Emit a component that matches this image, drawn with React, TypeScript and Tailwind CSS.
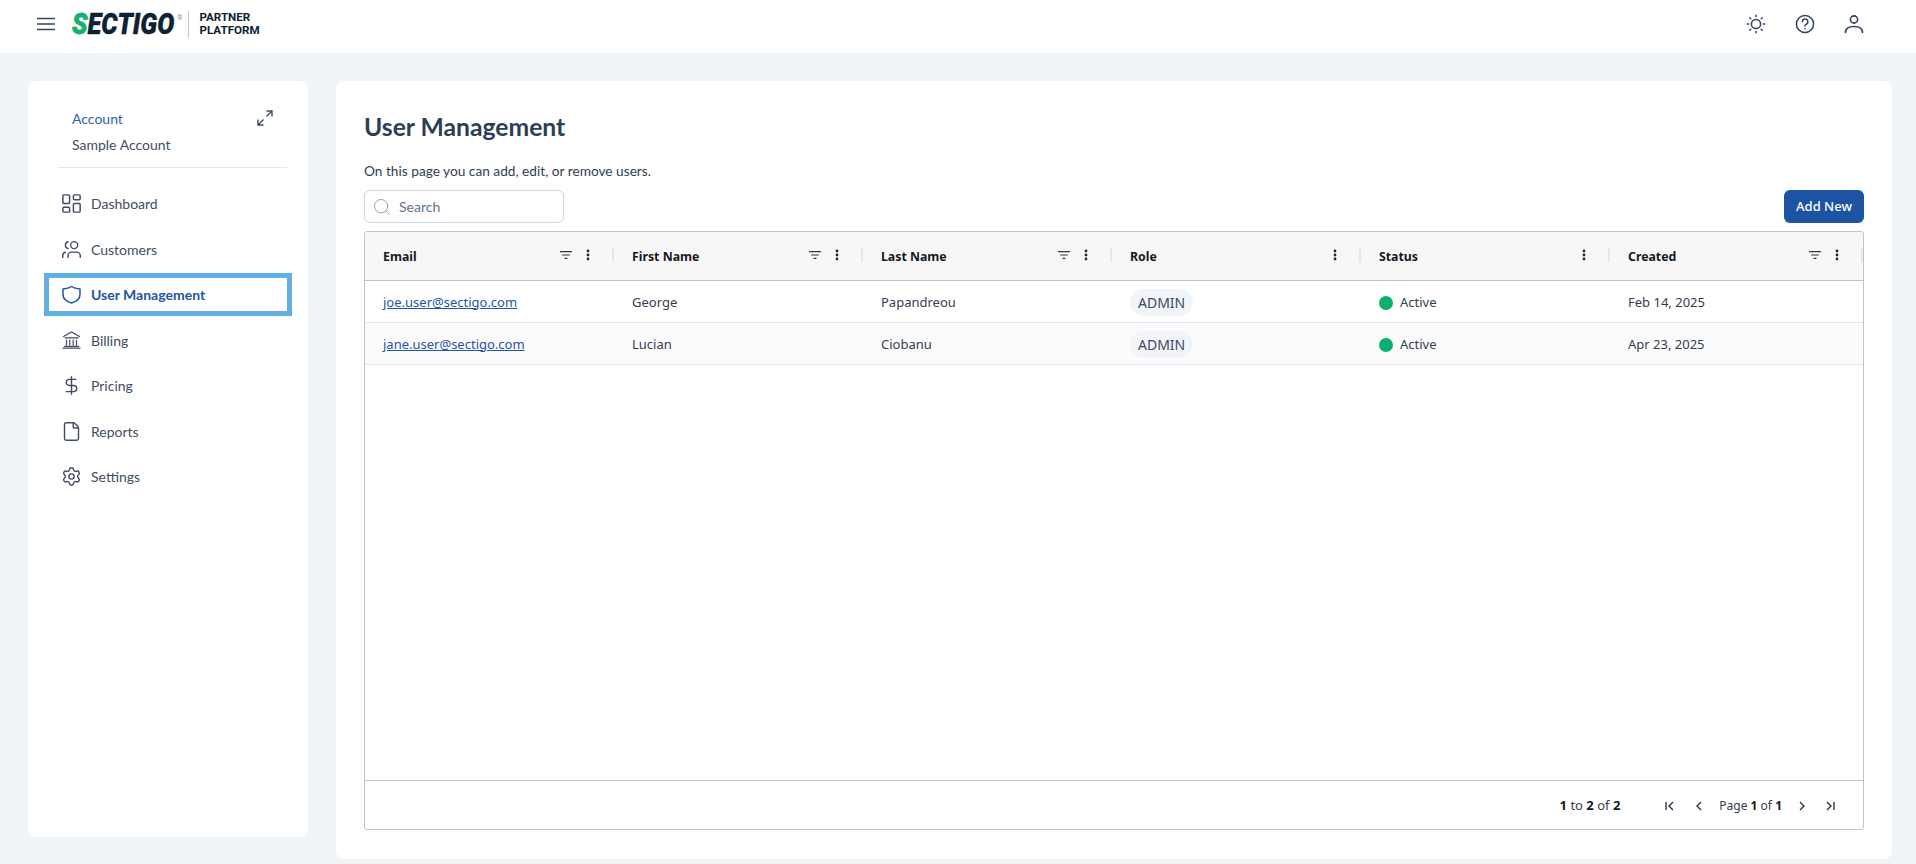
import { DollarSign, File, LayoutDashboard, Search, Settings, Users } from "lucide-react";
import type { ReactNode } from "react";

function ShieldIcon() {
  return (
    <svg width="19" height="19" viewBox="0 0 19 19" fill="none" stroke="currentColor" strokeWidth="1.5" strokeLinejoin="round">
      <path d="M9.5 1.5C11.5 3 14.5 3.8 18 4v5.5c0 4-3.5 7-8.5 8.5C4.5 16.500 1 13.500 1 9.500V4c3.500-.2 6.500-1 8.500-2.500z" />
    </svg>
  );
}

function BillingIcon() {
  return (
    <svg width="19" height="18" viewBox="0 0 19 18" fill="none" stroke="currentColor" strokeWidth="1.2" strokeLinecap="round">
      <path d="M1.500 5.500L9.500 1l8 4.500M3 6.800h13M4.500 9v5M7.800 9v5M11.200 9v5M14.500 9v5M2.500 15.300h14" />
      <path d="M1 17.200h17" strokeWidth="1.300" />
    </svg>
  );
}

const navItems = [
  { label: "Dashboard", icon: <LayoutDashboard size={23} strokeWidth={1.55} /> },
  { label: "Customers", icon: <Users size={21} strokeWidth={1.6} className="-scale-x-100" /> },
  { label: "User Management", icon: <ShieldIcon />, active: true },
  { label: "Billing", icon: <BillingIcon /> },
  { label: "Pricing", icon: <DollarSign size={21} strokeWidth={1.6} /> },
  { label: "Reports", icon: <File size={21} strokeWidth={1.6} /> },
  { label: "Settings", icon: <Settings size={21} strokeWidth={1.6} /> },
];

const columns = [
  { label: "Email", filter: true },
  { label: "First Name", filter: true },
  { label: "Last Name", filter: true },
  { label: "Role", filter: false },
  { label: "Status", filter: false },
  { label: "Created", filter: true },
];

const users = [
  { email: "joe.user@sectigo.com", first: "George", last: "Papandreou", created: "Feb 14, 2025" },
  { email: "jane.user@sectigo.com", first: "Lucian", last: "Ciobanu", created: "Apr 23, 2025" },
];

const gridCols = "grid grid-cols-[repeat(5,249px)_1fr]";

function Logo() {
  return (
    <div className="flex items-center ml-[17px]">
      <div className="w-[103px] h-[30px] overflow-visible">
        <div className="origin-left scale-x-[0.85] whitespace-nowrap font-['Roboto',sans-serif] font-black italic text-[30px] leading-[30px] text-[#0d2233] [-webkit-text-stroke:0.4px_#0d2233]">
          <span className="text-[#14b26f] [-webkit-text-stroke:0.8px_#14b26f]">S</span>ECTIGO
        </div>
      </div>
      <span className="text-[7px] text-[#8a94a0] -mt-[12px] ml-[2px] font-['Roboto',sans-serif]">®</span>
      <div className="w-px h-[27px] bg-[#c3c8cf] ml-[5px] mr-[11px]" />
      <div className="font-['Roboto',sans-serif] font-bold text-[11.6px] leading-[13px] text-[#0d2233]">
        <div>PARTNER</div>
        <div>PLATFORM</div>
      </div>
    </div>
  );
}

function Header() {
  return (
    <header className="h-[53px] bg-white flex items-center pl-[37px] pr-[51px] pb-[5px] text-[#33445c]">
      <svg width="18" height="14" viewBox="0 0 18 14" fill="none" stroke="currentColor" strokeWidth="1.6">
        <path d="M0 1.5h18M0 7h18M0 12.5h18" />
      </svg>
      <Logo />
      <div className="ml-auto flex items-center gap-[27px]">
        <svg width="22" height="22" viewBox="0 0 22 22" fill="none" stroke="currentColor" strokeWidth="1.5" strokeLinecap="round">
          <circle cx="11" cy="11" r="4.6" />
          <path d="M11 2.2v1.4M11 18.4v1.4M2.2 11h1.4M18.4 11h1.4M4.8 4.8l1 1M16.2 16.2l1 1M4.8 17.2l1-1M16.2 5.8l1-1" />
        </svg>
        <svg width="22" height="22" viewBox="0 0 22 22" fill="none" stroke="currentColor" strokeWidth="1.5" strokeLinecap="round">
          <circle cx="11" cy="11" r="8.6" />
          <path d="M8.4 8.8a2.7 2.7 0 1 1 3.8 2.4c-.8.4-1.2.9-1.2 1.8" />
          <path d="M11 15.6v.1" />
        </svg>
        <svg width="22" height="22" viewBox="0 0 22 22" fill="none" stroke="currentColor" strokeWidth="1.6" strokeLinecap="round">
          <circle cx="11" cy="6.5" r="3.6" />
          <path d="M2.5 19.5c0-4 3.6-6 8.5-6s8.5 2 8.5 6" />
        </svg>
      </div>
    </header>
  );
}

function Sidebar() {
  return (
    <aside className="w-[280px] h-[756px] shrink-0 bg-white rounded-lg pt-[25px] font-['Lato',sans-serif]">
      <div className="ml-[30px] mr-[21px] h-[62px] border-b border-[#e2e8f0] pl-[14px] pr-[14px] flex justify-between">
        <div className="text-[14px] leading-[26px]">
          <div className="text-[#2c5fb3]">Account</div>
          <div className="text-[#3f4d63]">Sample Account</div>
        </div>
        <svg width="16" height="16" viewBox="0 0 16 16" fill="none" stroke="#3f4d63" strokeWidth="1.4" className="mt-[4px]">
          <path d="M9.5 1h5.5v5.5M15 1L9.5 6.5M6.5 15H1V9.5M1 15l5.5-5.5" />
        </svg>
      </div>
      <nav className="mt-[14px] mx-[16px] flex flex-col gap-[2.5px]">
        {navItems.map((item) => (
          <div
            key={item.label}
            className={
              item.active
                ? "h-[43px] flex items-center gap-[10px] pl-[13px] border-[5px] border-[#62afe6] text-[#1f54a6] font-bold text-[14px]"
                : "h-[43px] flex items-center gap-[10px] pl-[18px] text-[#3f4d63] text-[14px]"
            }
          >
            <span className="w-[19px] flex justify-center shrink-0 [&>svg]:max-w-none [&>svg]:shrink-0">{item.icon}</span>
            {item.label}
          </div>
        ))}
      </nav>
    </aside>
  );
}

function FilterIcon() {
  return (
    <svg width="12" height="8" viewBox="0 0 12 8" fill="none" stroke="#2b3648" strokeWidth="1.2">
      <path d="M0 .6h12M2.2 4h7.6M4.6 7.4h2.8" />
    </svg>
  );
}

function DotsIcon() {
  return (
    <svg width="4" height="12" viewBox="0 0 4 12" fill="#1f2937">
      <circle cx="2" cy="2" r="1.4" />
      <circle cx="2" cy="6" r="1.4" />
      <circle cx="2" cy="10" r="1.4" />
    </svg>
  );
}

function HeaderCell({ label, filter }: { label: string; filter: boolean }) {
  return (
    <div className="flex items-center pl-[18px] pt-[2px] h-full">
      <span className="font-bold text-[12.3px] text-[#14181f] flex-1">{label}</span>
      <div className="flex items-center -mt-[4px]">
        {filter && <FilterIcon />}
        <span className="ml-[14px]"><DotsIcon /></span>
        <span className="w-[2px] h-[14px] bg-[#e2e8f0] ml-[22px]" />
      </div>
    </div>
  );
}

function Cell({ children }: { children: ReactNode }) {
  return <div className="flex items-center pl-[18px] pt-[2px] text-[13px] text-[#323e50]">{children}</div>;
}

function PagerIcon({ d }: { d: string }) {
  return (
    <svg width="12" height="12" viewBox="0 0 12 12" fill="none" stroke="#2b3648" strokeWidth="1.4">
      <path d={d} />
    </svg>
  );
}

function Table() {
  return (
    <div className="mt-[8px] h-[599px] flex flex-col border border-[#bfc4ce] rounded-[3px] font-['Noto_Sans',sans-serif]">
      <div className={`${gridCols} h-[49px] bg-[#f7f7f8] border-b border-[#bfc4ce] shrink-0 rounded-t-[3px]`}>
        {columns.map((col) => (
          <HeaderCell key={col.label} label={col.label} filter={col.filter} />
        ))}
      </div>
      <div className="flex-1">
        {users.map((user, i) => (
          <div
            key={user.email}
            className={`${gridCols} h-[42px] border-b border-[#e2e5ec] ${i % 2 === 1 ? "bg-[#fbfbfc]" : "bg-white"}`}
          >
            <Cell>
              <a href="#" className="text-[#1f54a6] underline">{user.email}</a>
            </Cell>
            <Cell>{user.first}</Cell>
            <Cell>{user.last}</Cell>
            <Cell>
              <span className="h-[27px] px-[8px] flex items-center rounded-full bg-[#f1f4f9] text-[14px] text-[#3b4a5f]">ADMIN</span>
            </Cell>
            <Cell>
              <span className="w-[14px] h-[14px] rounded-full bg-[#0bb06e] mr-[7px]" />
              Active
            </Cell>
            <Cell>{user.created}</Cell>
          </div>
        ))}
      </div>
      <div className="h-[49px] shrink-0 border-t border-[#bfc4ce] flex items-center justify-end pr-[27px] pt-[2px] text-[13px] text-[#323e50]">
        <span><b className="text-[#14181f]">1</b> to <b className="text-[#14181f]">2</b> of <b className="text-[#14181f]">2</b></span>
        <div className="ml-[44px] flex items-center">
          <PagerIcon d="M2 2v8M9 2L5 6l4 4" />
          <span className="ml-[17px]"><PagerIcon d="M8 2L4 6l4 4" /></span>
          <span className="ml-[14px] text-[12px]">Page <b className="text-[#14181f]">1</b> of <b className="text-[#14181f]">1</b></span>
          <span className="ml-[14px]"><PagerIcon d="M4 2l4 4-4 4" /></span>
          <span className="ml-[16px]"><PagerIcon d="M3 2l4 4-4 4M10 2v8" /></span>
        </div>
      </div>
    </div>
  );
}

export default function App() {
  return (
    <div className="h-[864px] overflow-hidden bg-[#f0f4f8]">
      <Header />
      <div className="flex gap-[28px] pl-[28px] pr-[24px] pt-[28px]">
        <Sidebar />
        <main className="flex-1 h-[778px] bg-white rounded-lg pl-[28px] pr-[28px] pt-[27px]">
          <h1 className="font-['Lato',sans-serif] font-bold text-[24.7px] leading-[38px] text-[#2d3e55]">User Management</h1>
          <p className="mt-[15px] font-['Lato',sans-serif] text-[13.7px] leading-[20px] text-[#323e50]">On this page you can add, edit, or remove users.</p>
          <div className="mt-[9px] flex items-center justify-between">
            <div className="w-[200px] h-[33px] border border-[#cbd5e1] rounded-md flex items-center pl-[7px] gap-[7px]">
              <Search size={20} strokeWidth={1.2} className="text-[#94a3b8] shrink-0" />
              <input placeholder="Search" className="w-full outline-none bg-transparent font-['Lato',sans-serif] text-[14px] placeholder:text-[#64748b]" />
            </div>
            <button className="w-[80px] h-[33px] bg-[#1c53a3] rounded-md text-white text-[13px] font-medium font-['Noto_Sans',sans-serif]">Add New</button>
          </div>
          <Table />
        </main>
      </div>
    </div>
  );
}
